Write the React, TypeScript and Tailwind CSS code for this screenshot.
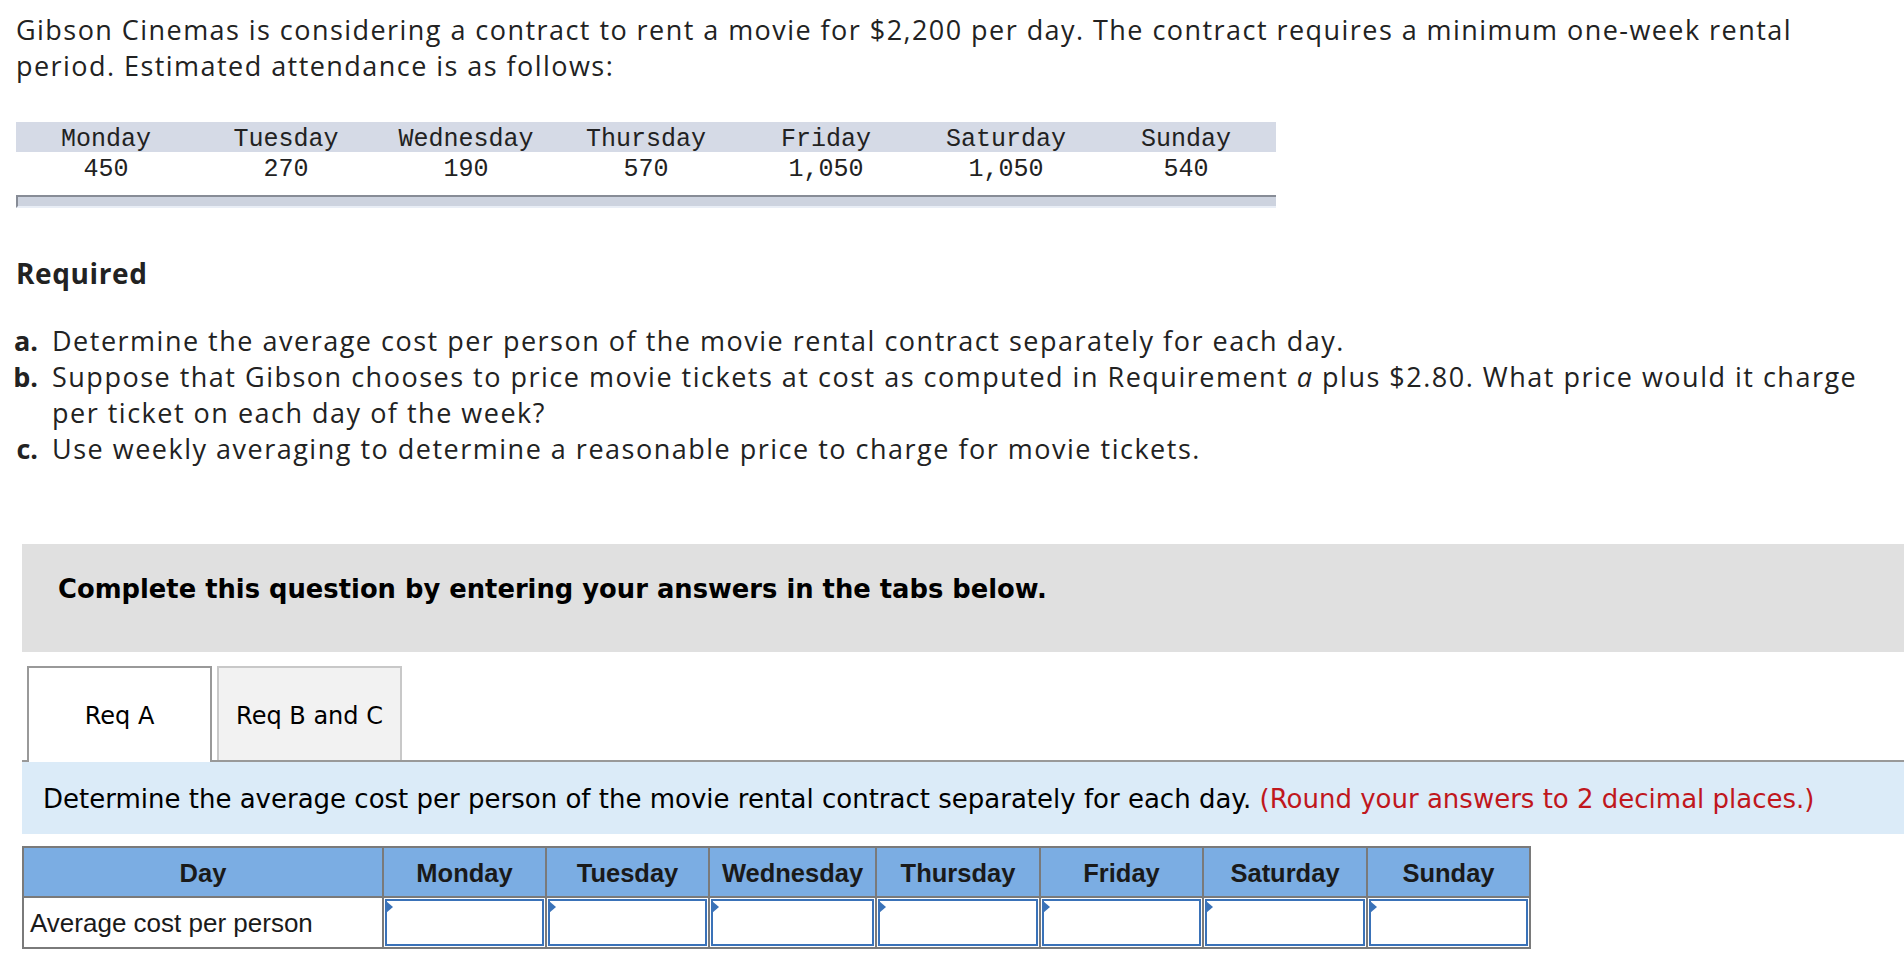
import React from 'react';

const days = ['Monday', 'Tuesday', 'Wednesday', 'Thursday', 'Friday', 'Saturday', 'Sunday'];
const attendance = ['450', '270', '190', '570', '1,050', '1,050', '540'];

const proxima = "font-['Open_Sans',sans-serif]";
const verdana = "font-['DejaVu_Sans',Verdana,sans-serif]";

const InputCell = () => (
  <div className="relative border-l-2 border-[#7a7a7a] p-[1px] h-[49px]">
    <div className="h-full border-2 border-[#3a72b8] bg-white" />
    <div className="absolute left-[2px] top-[3px] w-0 h-0 border-y-[6px] border-y-transparent border-l-[7px] border-l-[#3a72b8]" />
  </div>
);

const App = () => {
  return (
    <div className="w-[1904px] h-[958px] bg-white overflow-hidden text-[#222]">
      <p className={`${proxima} text-[27px] leading-[36px] tracking-[1.45px] pl-[16px] pt-[12px]`}>
        Gibson Cinemas is considering a contract to rent a movie for $2,200 per day. The contract requires a minimum one-week rental
        <br />
        period. Estimated attendance is as follows:
      </p>

      <div className="ml-[16px] mt-[38px] w-[1260px] font-['Liberation_Mono',monospace] text-[25px]">
        <div className="grid grid-cols-7 bg-[#d5dae6] h-[30px] leading-[36px]">
          {days.map((d) => (
            <div key={d} className="text-center">{d}</div>
          ))}
        </div>
        <div className="grid grid-cols-7 h-[33px] leading-[35px]">
          {attendance.map((v, i) => (
            <div key={i} className="text-center">{v}</div>
          ))}
        </div>
        <div className="mt-[10px] h-[13px] border-t-2 border-l-2 border-[#878c96] bg-[#cdd3df] border-b-2 border-b-[#e9eef6]" />
      </div>

      <h3 className={`${proxima} font-bold text-[28px] leading-[36px] tracking-[0.6px] pl-[16px] mt-[47px]`}>Required</h3>

      <div className={`${proxima} text-[27px] leading-[36px] tracking-[1.5px] mt-[32px]`}>
        <div className="flex">
          <span className="w-[38px] text-right font-bold tracking-normal">a.</span>
          <span className="ml-[14px]">Determine the average cost per person of the movie rental contract separately for each day.</span>
        </div>
        <div className="flex">
          <span className="w-[38px] text-right font-bold tracking-normal">b.</span>
          <span className="ml-[14px]">
            Suppose that Gibson chooses to price movie tickets at cost as computed in Requirement <i>a</i> plus $2.80. What price would it charge
            <br />
            per ticket on each day of the week?
          </span>
        </div>
        <div className="flex">
          <span className="w-[38px] text-right font-bold tracking-normal">c.</span>
          <span className="ml-[14px]">Use weekly averaging to determine a reasonable price to charge for movie tickets.</span>
        </div>
      </div>

      <div className={`${verdana} ml-[22px] mt-[77px] h-[108px] bg-[#e0e0e0] pl-[36px] pt-[27px]`}>
        <span className="font-bold text-[25.8px] leading-[36px] text-black">Complete this question by entering your answers in the tabs below.</span>
      </div>

      <div className={`${verdana} ml-[22px] mt-[14px] pl-[5px] flex gap-[5px] border-b-2 border-[#999] h-[96px] text-[24px] text-black`}>
        <div className="w-[185px] h-[96px] border-2 border-b-0 border-[#999] bg-white flex items-center justify-center -mb-[2px] pt-[2px]">
          Req A
        </div>
        <div className="w-[185px] h-[94px] border-2 border-b-0 border-[#c8c8c8] bg-[#f2f2f2] flex items-center justify-center pt-[4px]">
          Req B and C
        </div>
      </div>

      <div className={`${verdana} ml-[22px] h-[72px] bg-[#dbebf8] flex items-center pl-[21px] pt-[3px] text-[26px] text-black`}>
        <span>
          Determine the average cost per person of the movie rental contract separately for each day.{' '}
          <span className="text-[#c0171d]">(Round your answers to 2 decimal places.)</span>
        </span>
      </div>

      <div className="ml-[22px] mt-[12px] w-[1509px] border-2 border-[#7a7a7a] font-['Liberation_Sans',Arial,sans-serif] text-[#1a1a1a]">
        <div className="grid grid-cols-[358px_163px_163px_167px_164px_163px_164px_163px] bg-[#7badE3] border-b-2 border-[#7a7a7a] h-[50px] text-[25.5px] font-bold">
          <div className="flex items-center justify-center pt-[2px]">Day</div>
          {days.map((d) => (
            <div key={d} className="border-l-2 border-[#7a7a7a] flex items-center justify-center pt-[2px]">{d}</div>
          ))}
        </div>
        <div className="grid grid-cols-[358px_163px_163px_167px_164px_163px_164px_163px] h-[49px]">
          <div className="flex items-center pl-[6px] pt-[2px] text-[26px]">Average cost per person</div>
          {days.map((d) => (
            <InputCell key={d} />
          ))}
        </div>
      </div>
    </div>
  );
};

export default App;
